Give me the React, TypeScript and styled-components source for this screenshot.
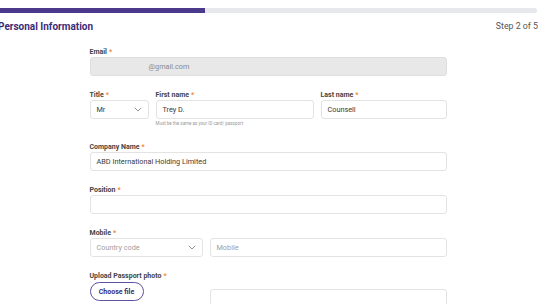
import React from "react";
import styled, { createGlobalStyle } from "styled-components";

const Global = createGlobalStyle`
  html, body { margin: 0; padding: 0; background: #ffffff; }
  body { font-family: Roboto, "Liberation Sans", Arial, sans-serif; overflow: hidden; }
  * { box-sizing: border-box; }
`;

const Page = styled.div`
  width: 540px;
  margin-left: -2px;
  padding-top: 8px;
`;

const Progress = styled.div`
  height: 5px;
  margin-right: 1px;
  background: #e6e8ec;
  border-radius: 3px;
  overflow: hidden;
`;

const ProgressFill = styled.div<{ $pct: number }>`
  height: 100%;
  width: ${(p) => p.$pct}%;
  background: #4b3a8c;
`;

const Header = styled.div`
  display: flex;
  justify-content: space-between;
  align-items: center;
  margin-top: 6px;
  height: 14px;
`;

const Heading = styled.h1`
  margin: 0;
  font-size: 10px;
  font-weight: 700;
  color: #3b2b78;
`;

const StepText = styled.span`
  font-size: 8.8px;
  color: #555;
`;

const Form = styled.div`
  width: 357px;
  margin: 14px auto 0;
  display: flex;
  flex-direction: column;
  gap: 14px;
`;

const Row = styled.div<{ $cols: string }>`
  display: grid;
  grid-template-columns: ${(p) => p.$cols};
  column-gap: 7px;
  align-items: start;
`;

const Field = styled.div<{ $offset?: number }>`
  display: flex;
  flex-direction: column;
  min-width: 0;
  margin-top: ${(p) => p.$offset ?? 0}px;
`;

const Label = styled.label`
  font-size: 7px;
  line-height: 10px;
  font-weight: 700;
  color: #444;
  height: 10px;
`;

const Req = styled.span`
  color: #f5893d;
  margin-left: 2px;
`;

const Box = styled.div<{ $disabled?: boolean }>`
  height: 19px;
  border: 1px solid ${(p) => (p.$disabled ? "#dedede" : "#e3e3e3")};
  background: ${(p) => (p.$disabled ? "#e8e8e8" : "#ffffff")};
  border-radius: 3px;
  display: flex;
  align-items: center;
  justify-content: space-between;
  padding: 0 6px 0 6px;
  font-size: 7.3px;
  color: #3a3a3a;
`;

const Placeholder = styled.span`
  color: #a0a0a0;
`;

const Muted = styled.span`
  color: #8a8a8a;
`;

const Redacted = styled.span`
  display: inline-block;
  width: 52px;
`;

const Helper = styled.div`
  font-size: 4.5px;
  line-height: 6px;
  color: #999;
  margin-top: 2px;
  margin-bottom: 1px;
`;

const ChooseBtn = styled.button`
  width: 54px;
  height: 19px;
  border: 1.5px solid #5f4f9e;
  border-radius: 10px;
  background: #fff;
  color: #3b2b78;
  font-family: inherit;
  font-size: 7px;
  font-weight: 700;
  padding: 0;
`;

const Chevron = () => (
  <svg width="8" height="5" viewBox="0 0 8 5" fill="none">
    <path d="M0.8 0.8 L4 4 L7.2 0.8" stroke="#8a8a8a" strokeWidth="0.9" />
  </svg>
);

export default function App() {
  return (
    <>
      <Global />
      <Page>
        <Progress>
          <ProgressFill $pct={38.4} />
        </Progress>
        <Header>
          <Heading>Personal Information</Heading>
          <StepText>Step 2 of 5</StepText>
        </Header>
        <Form>
          <Field>
            <Label>
              Email<Req>*</Req>
            </Label>
            <Box $disabled>
              <Muted>
                <Redacted />@gmail.com
              </Muted>
            </Box>
          </Field>
          <Row $cols="59px 158px 1fr">
            <Field>
              <Label>
                Title<Req>*</Req>
              </Label>
              <Box>
                <span>Mr</span>
                <Chevron />
              </Box>
            </Field>
            <Field>
              <Label>
                First name<Req>*</Req>
              </Label>
              <Box>
                <span>Trey D.</span>
              </Box>
              <Helper>Must be the same as your ID card/ passport</Helper>
            </Field>
            <Field>
              <Label>
                Last name<Req>*</Req>
              </Label>
              <Box>
                <span>Counsell</span>
              </Box>
            </Field>
          </Row>
          <Field>
            <Label>
              Company Name<Req>*</Req>
            </Label>
            <Box>
              <span>ABD International Holding Limited</span>
            </Box>
          </Field>
          <Field>
            <Label>
              Position<Req>*</Req>
            </Label>
            <Box />
          </Field>
          <Field>
            <Label>
              Mobile<Req>*</Req>
            </Label>
            <Row $cols="113px 1fr">
              <Box>
                <Placeholder>Country code</Placeholder>
                <Chevron />
              </Box>
              <Box>
                <Placeholder>Mobile</Placeholder>
              </Box>
            </Row>
          </Field>
          <Field>
            <Label>
              Upload Passport photo<Req>*</Req>
            </Label>
            <Row $cols="113px 1fr">
              <Field $offset={1}>
                <ChooseBtn>Choose file</ChooseBtn>
              </Field>
              <Field $offset={8}>
                <Box />
              </Field>
            </Row>
          </Field>
        </Form>
      </Page>
    </>
  );
}
